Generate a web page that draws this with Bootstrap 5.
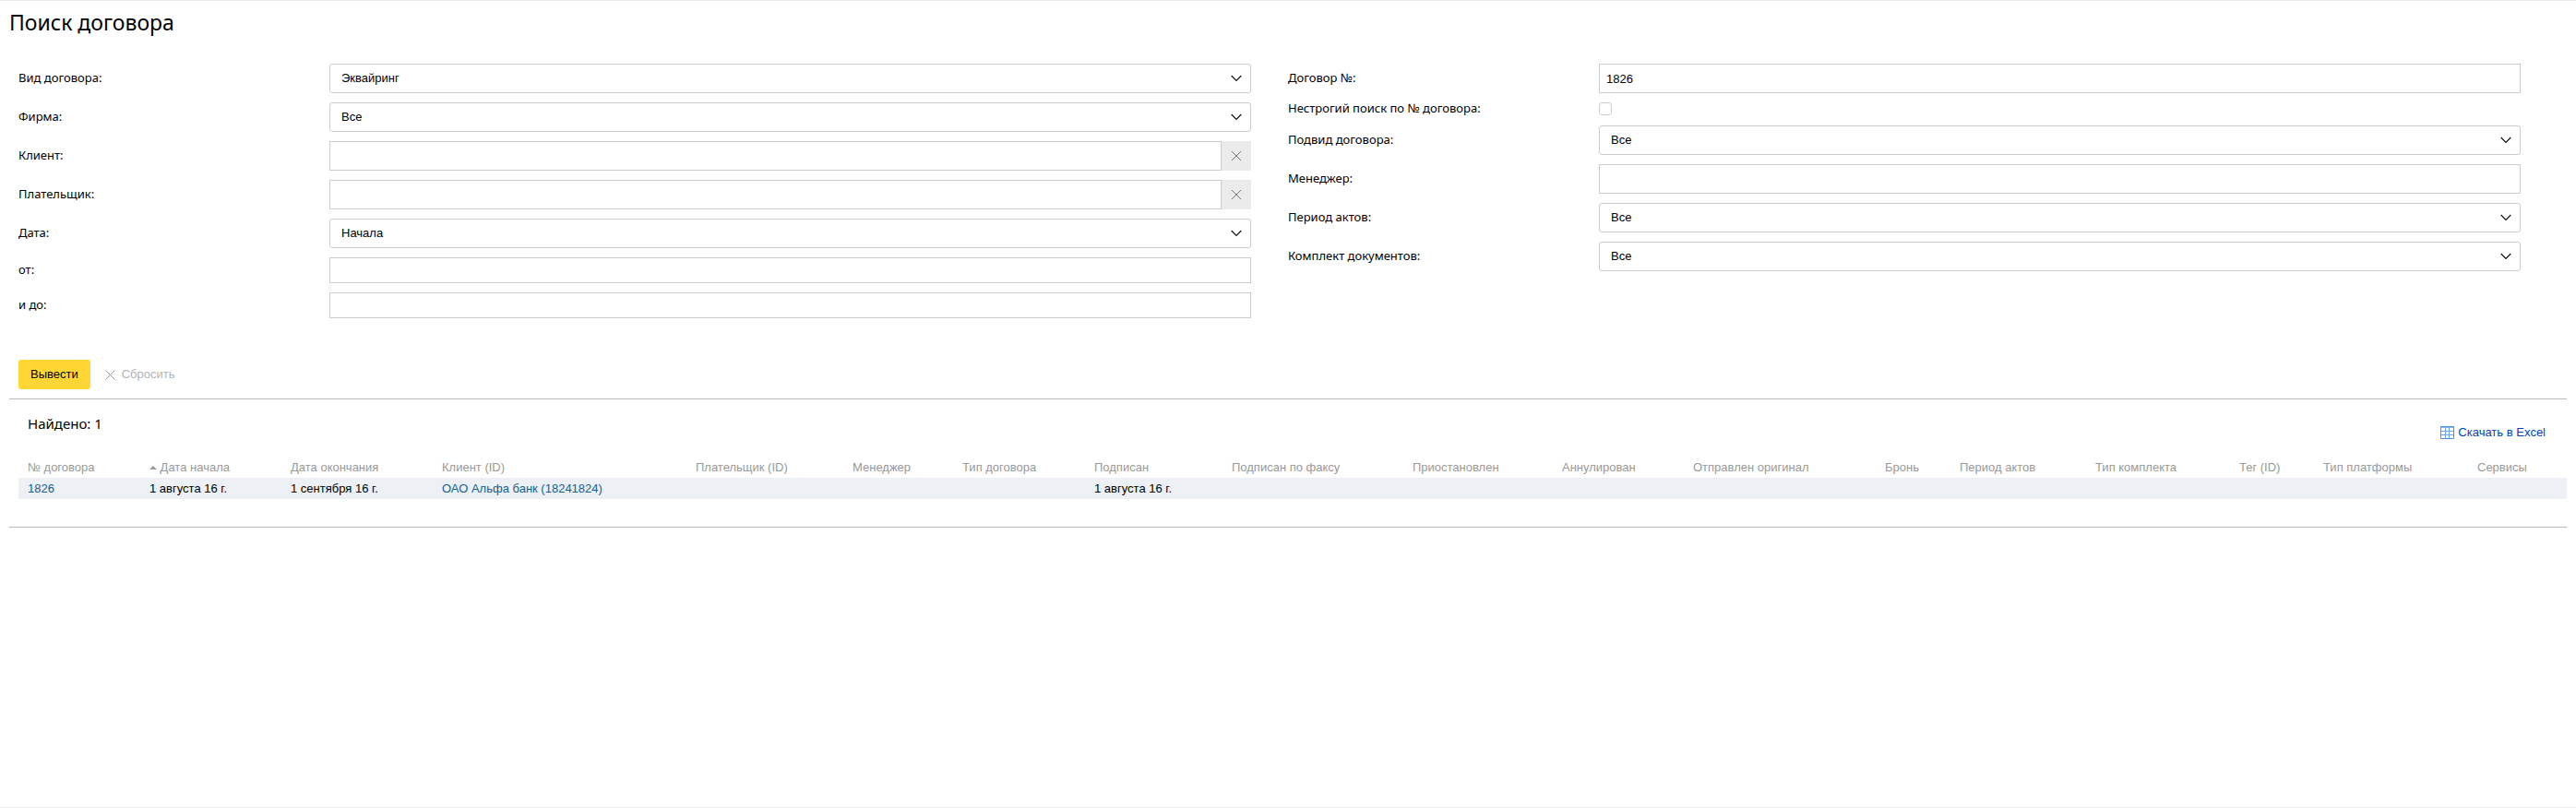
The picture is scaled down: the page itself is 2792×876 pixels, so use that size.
<!DOCTYPE html>
<html lang="ru">
<head>
<meta charset="utf-8">
<meta name="viewport" content="width=device-width, initial-scale=1">
<title>Поиск договора</title>
<link href="https://cdn.jsdelivr.net/npm/bootstrap@5.3.0/dist/css/bootstrap.min.css" rel="stylesheet">
<style>
body{font-family:"Liberation Sans",Arial,sans-serif;font-size:13px;line-height:15px;color:#000;background:#fff;border-top:1px solid #ebebeb;border-bottom:1px solid #ebebeb}
.main-area{padding:9px 10px 0}
.page-title{font:400 23px/28px "Noto Sans",sans-serif;margin:0 0 31px}
.search-form{padding:0 10px}
.search-form .fields{display:grid;gap:10px;padding-right:40px;align-content:start}
.field{display:grid;grid-template-columns:1fr 3fr;column-gap:4px;align-items:center}
.field label{font-family:"Noto Sans",sans-serif;line-height:13px;margin-bottom:2px}
.field .form-control,.field .form-select{font-size:13px;line-height:16px;color:#000;border:1px solid #ccc;box-shadow:none}
.field .form-control{height:32px;padding:0 7px;border-radius:0}
.field .form-control.date-input{height:28px}
.field .form-select{height:32px;padding:0 32px 0 12px;border-radius:3px;background-size:12px 8px;background-position:right 9px center;background-image:url("data:image/svg+xml,%3Csvg xmlns='http://www.w3.org/2000/svg' viewBox='0 0 12 8'%3E%3Cpath d='M.7 1 6 6.4 11.3 1' fill='none' stroke='%23111' stroke-width='1.2'/%3E%3C/svg%3E")}
.field .form-check-input{width:14px;height:14px;margin:0 0 1px;border:1px solid #ccc;border-radius:3px}
.clear-btn{width:32px;height:32px;background:#ebebeb;color:#777;border:0}
.form-actions{margin:45px 0 10px}
.btn-run{height:32px;padding:0 13px;font-size:13px;line-height:16px;border:0;border-radius:3px;background:#ffd633;color:#000}
.btn-reset{height:32px;padding:0;gap:7px;font-size:13px;line-height:16px;border:0;color:#b3b3b3;background:none}
.btn-reset svg{color:#999}
.results{border-top:1px solid #b8b8b8;border-bottom:1px solid #b8b8b8;padding:16px 0 30px 10px}
.result-head{padding-left:10px;height:47px}
.found{font:400 15px/20px "Noto Sans",sans-serif;margin:0}
.excel{color:#04b;gap:4px;margin:12px 23px 0 0}
.result-table{width:100%;table-layout:fixed;white-space:nowrap;border-collapse:collapse}
.result-table th{font-weight:400;color:#999;padding:3px 10px 4px}
.result-table td{padding:4px 10px;background:#edf0f5}
.result-table a{color:#14608f}
.sort-mark{vertical-align:2px}
</style>
</head>
<body class="min-vh-100">
<main class="main-area">
<h1 class="page-title">Поиск договора</h1>
<form class="search-form">
<div class="row g-0">
<div class="col-6 fields">
<div class="field"><label for="kind">Вид договора:</label><select class="form-select" id="kind"><option>Эквайринг</option></select></div>
<div class="field"><label for="firm">Фирма:</label><select class="form-select" id="firm"><option>Все</option></select></div>
<div class="field"><label for="client">Клиент:</label><div class="d-flex"><input class="form-control" id="client" type="text"><button type="button" class="clear-btn p-0 flex-shrink-0 d-flex align-items-center justify-content-center" aria-label="Очистить"><svg width="10" height="10" viewBox="0 0 10 10"><path d="M0 0l10 10M10 0L0 10" stroke="currentColor"/></svg></button></div></div>
<div class="field"><label for="payer">Плательщик:</label><div class="d-flex"><input class="form-control" id="payer" type="text"><button type="button" class="clear-btn p-0 flex-shrink-0 d-flex align-items-center justify-content-center" aria-label="Очистить"><svg width="10" height="10" viewBox="0 0 10 10"><path d="M0 0l10 10M10 0L0 10" stroke="currentColor"/></svg></button></div></div>
<div class="field"><label for="date">Дата:</label><select class="form-select" id="date"><option>Начала</option></select></div>
<div class="field"><label for="from">от:</label><input class="form-control date-input" id="from" type="text"></div>
<div class="field"><label for="to">и до:</label><input class="form-control date-input" id="to" type="text"></div>
</div>
<div class="col-6 fields">
<div class="field"><label for="num">Договор №:</label><input class="form-control" id="num" type="text" value="1826"></div>
<div class="field"><label for="loose">Нестрогий поиск по № договора:</label><input class="form-check-input" id="loose" type="checkbox"></div>
<div class="field"><label for="sub">Подвид договора:</label><select class="form-select" id="sub"><option>Все</option></select></div>
<div class="field"><label for="manager">Менеджер:</label><input class="form-control" id="manager" type="text"></div>
<div class="field"><label for="period">Период актов:</label><select class="form-select" id="period"><option>Все</option></select></div>
<div class="field"><label for="docs">Комплект документов:</label><select class="form-select" id="docs"><option>Все</option></select></div>
</div>
</div>
<div class="d-flex gap-3 form-actions">
<button type="submit" class="btn btn-run">Вывести</button>
<button type="reset" class="btn btn-reset d-flex align-items-center"><svg width="11" height="11" viewBox="0 0 11 11"><path d="M.5.5l10 10M10.5.5l-10 10" stroke="currentColor"/></svg>Сбросить</button>
</div>
</form>
<section class="results">
<div class="d-flex justify-content-between align-items-start result-head">
<h2 class="found">Найдено: 1</h2>
<a href="#" class="excel d-flex align-items-center text-decoration-none"><svg width="15" height="14" viewBox="0 0 15 14"><path d="M.5.5h14v13H.5z" fill="#fff" stroke="#4a90e2"/><path d="M1 1h13v1H1z" fill="#8dbcf2"/><path d="M1 5.500h13M1 9.500h13M5.500 1v12M9.500 1v12" fill="none" stroke="#6aa7ee"/></svg>Скачать в Excel</a>
</div>
<table class="result-table">
<colgroup><col width="132"><col width="153"><col width="164"><col width="275"><col width="170"><col width="119"><col width="143"><col width="149"><col width="196"><col width="162"><col width="142"><col width="208"><col width="81"><col width="147"><col width="156"><col width="91"><col width="167"><col width="107"></colgroup>
<thead><tr><th>№ договора</th><th><svg class="sort-mark" width="8" height="4" viewBox="0 0 8 4"><path d="M0 4 4 0l4 4z" fill="#999"/></svg> Дата начала</th><th>Дата окончания</th><th>Клиент (ID)</th><th>Плательщик (ID)</th><th>Менеджер</th><th>Тип договора</th><th>Подписан</th><th>Подписан по факсу</th><th>Приостановлен</th><th>Аннулирован</th><th>Отправлен оригинал</th><th>Бронь</th><th>Период актов</th><th>Тип комплекта</th><th>Тег (ID)</th><th>Тип платформы</th><th>Сервисы</th></tr></thead>
<tbody><tr><td><a href="#" class="text-decoration-none">1826</a></td><td>1 августа 16 г.</td><td>1 сентября 16 г.</td><td><a href="#" class="text-decoration-none">ОАО Альфа банк (18241824)</a></td><td></td><td></td><td></td><td>1 августа 16 г.</td><td></td><td></td><td></td><td></td><td></td><td></td><td></td><td></td><td></td><td></td></tr></tbody>
</table>
</section>
</main>
<script src="https://cdn.jsdelivr.net/npm/bootstrap@5.3.0/dist/js/bootstrap.bundle.min.js"></script>
</body>
</html>
